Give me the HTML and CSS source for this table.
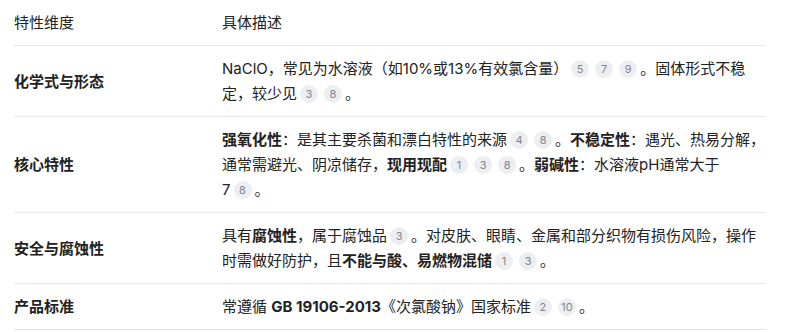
FILE: index.html
```html
<!DOCTYPE html>
<html lang="zh">
<head>
<meta charset="utf-8">
<link rel="stylesheet" href="styles.css">
</head>
<body>
<table class="spec">
  <thead>
    <tr><th class="dim">特性维度</th><th class="desc">具体描述</th></tr>
  </thead>
  <tbody>
    <tr>
      <td class="dim">化学式与形态</td>
      <td class="desc">NaClO，常见为水溶液（如10%或13%有效氯含量）<span class="cite">5</span><span class="cite">7</span><span class="cite">9</span>。固体形式不稳定，较少见<span class="cite">3</span><span class="cite">8</span>。</td>
    </tr>
    <tr>
      <td class="dim">核心特性</td>
      <td class="desc"><b>强氧化性</b>：是其主要杀菌和漂白特性的来源<span class="cite">4</span><span class="cite">8</span>。<b>不稳定性</b>：遇光、热易分解，通常需避光、阴凉储存，<b>现用现配</b><span class="cite">1</span><span class="cite">3</span><span class="cite">8</span>。<b>弱碱性</b>：水溶液pH通常大于<span class="keep">7<span class="cite">8</span>。</span></td>
    </tr>
    <tr>
      <td class="dim">安全与腐蚀性</td>
      <td class="desc">具有<b>腐蚀性</b>，属于腐蚀品<span class="cite">3</span>。对皮肤、眼睛、金属和部分织物有损伤风险，操作时需做好防护，且<b>不能与酸、易燃物混储</b><span class="cite">1</span><span class="cite">3</span>。</td>
    </tr>
    <tr>
      <td class="dim">产品标准</td>
      <td class="desc">常遵循 <b>GB 19106-2013</b>《次氯酸钠》国家标准<span class="cite">2</span><span class="cite">10</span>。</td>
    </tr>
  </tbody>
</table>
</body>
</html>
```

FILE: styles.css
```css
html, body {
  margin: 0;
  padding: 0;
  background: #ffffff;
}
body {
  font-family: Inter, "Noto Sans CJK SC", sans-serif;
  font-size: 15px;
  color: #222222;
  padding: 0 24px 0 14px;
}
.spec {
  width: 752px;
  border-collapse: collapse;
  table-layout: fixed;
}
.spec th, .spec td {
  text-align: left;
  vertical-align: middle;
  line-height: 25px;
  padding: 10px 0 10px 0;
  border-bottom: 1px solid #e5e5e5;
}
.spec th {
  font-weight: 400;
}
.spec .dim {
  width: 208px;
}
.spec td.dim {
  font-weight: 700;
}
.spec b {
  font-weight: 700;
}
.keep {
  white-space: nowrap;
}
.cite {
  display: inline-block;
  min-width: 18px;
  height: 18px;
  padding: 0 3px;
  box-sizing: border-box;
  margin: 0 3px;
  border-radius: 9px;
  background: #eceef2;
  color: #80848c;
  font-size: 11px;
  font-weight: 400;
  line-height: 18px;
  text-align: center;
  vertical-align: 1px;
}
```
